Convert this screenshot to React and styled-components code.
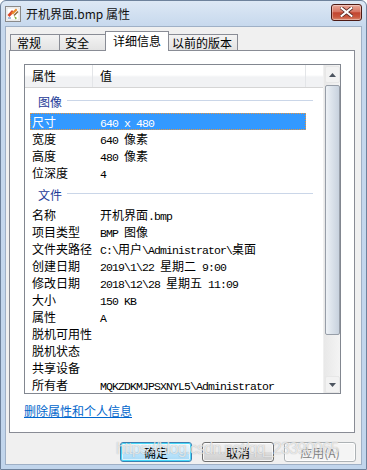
import styled, { createGlobalStyle, css } from 'styled-components'

const GlobalStyle = createGlobalStyle`
  html, body {
    margin: 0;
    padding: 0;
    background: #ffffff;
  }
  * {
    box-sizing: border-box;
  }
`

const UI_FONT = `"Noto Sans CJK SC", "Noto Sans", sans-serif`

const Window = styled.div`
  position: relative;
  width: 367px;
  height: 470px;
  display: flex;
  flex-direction: column;
  border: 1px solid #6e829c;
  border-radius: 6px 6px 0 0;
  background: linear-gradient(#dde8f5 0px, #c6d8ed 26px, #c1d5ec 100%);
  font-family: ${UI_FONT};
  font-size: 12px;
  color: #000;
  overflow: hidden;
`

const TitleBar = styled.div`
  height: 25px;
  display: flex;
  align-items: center;
  padding: 0 4px 0 4px;
`

const TitleText = styled.div`
  margin-left: 5px;
  font-size: 12px;
  color: #111;
  flex: 1;
`

const CloseButton = styled.div`
  width: 31px;
  height: 17px;
  margin-top: -3px;
  border: 1px solid #4d1a14;
  border-radius: 3px;
  background: linear-gradient(#e9a898 0%, #d77563 45%, #c2452f 52%, #c9583f 80%, #dc8a70 100%);
  box-shadow: inset 0 0 0 1px rgba(255, 255, 255, 0.35);
  display: flex;
  align-items: center;
  justify-content: center;
`

const Body = styled.div`
  position: relative;
  flex: 1;
  margin: 0 4px 4px 4px;
  border: 1px solid #9fb0c6;
  background: #f0f0f0;
  display: flex;
  flex-direction: column;
  padding: 4px 5px 0 3px;
  overflow: hidden;
`

const TabStrip = styled.div`
  display: flex;
  align-items: flex-end;
  height: 19px;
  padding-left: 1px;
  position: relative;
  z-index: 1;
`

const Tab = styled.div`
  width: ${p => p.$w}px;
  height: 16px;
  line-height: 15px;
  padding-left: ${p => p.$pad}px;
  margin-right: -1px;
  border: 1px solid #898c95;
  border-bottom: none;
  background: linear-gradient(#f3f3f3, #e3e3e3);
  font-size: 12px;
  white-space: nowrap;
  overflow: hidden;
  ${p => p.$active && css`
    height: 20px;
    line-height: 18px;
    margin: 0 -1px -1px -1px;
    background: #ffffff;
    position: relative;
    z-index: 2;
  `}
`

const Panel = styled.div`
  height: 383px;
  margin-right: 1px;
  border: 1px solid #898c95;
  background: #ffffff;
  padding: 13px 13px 0 14px;
  display: flex;
  flex-direction: column;
`

const ListView = styled.div`
  height: 330px;
  border: 1px solid #828790;
  display: flex;
  background: #fff;
`

const ListContent = styled.div`
  flex: 1;
  display: flex;
  flex-direction: column;
  overflow: hidden;
`

const Header = styled.div`
  height: 23px;
  display: flex;
  background: linear-gradient(#ffffff 0%, #ffffff 45%, #f1f2f4 55%, #f1f2f4 100%);
  border-bottom: 1px solid #d5d5d5;
`

const HeaderCell = styled.div`
  width: ${p => p.$w}px;
  padding-left: 7px;
  line-height: 22px;
  font-size: 12px;
  border-right: ${p => (p.$divider ? '1px solid #e3e5e8' : 'none')};
`

const GroupRow = styled.div`
  height: 25px;
  display: flex;
  align-items: center;
  padding: 1px 10px 0 13px;
  color: #1e3b98;
  font-size: 12px;
`

const GroupLine = styled.div`
  flex: 1;
  height: 1px;
  margin-left: 5px;
  margin-top: -1px;
  background: #cad6e8;
`

const Row = styled.div`
  height: 17px;
  width: 276px;
  margin-left: 5px;
  display: flex;
  align-items: center;
  border: 1px solid transparent;
  ${p => p.$selected && css`
    background: #3399ff;
    border: 1px dotted #e9953f;
    color: #ffffff;
  `}
`

const Label = styled.div`
  width: 69px;
  padding-left: 1px;
  font-size: 12px;
  white-space: nowrap;
`

const Value = styled.div`
  font-size: 12px;
  white-space: nowrap;
`

const Mono = styled.span`
  font-family: "Liberation Mono", "DejaVu Sans Mono", monospace;
  font-size: 11.5px;
  letter-spacing: -0.9px;
`

const ScrollBar = styled.div`
  width: 17px;
  display: flex;
  flex-direction: column;
  align-items: center;
  background: linear-gradient(to right, #e8e8e8, #f4f4f4);
  border-left: 1px solid #f0f0f0;
`

const ScrollArrow = styled.div`
  width: 15px;
  height: 17px;
  margin-top: ${p => (p.$down ? '0' : '1px')};
  display: flex;
  align-items: center;
  justify-content: center;
  background: #f2f2f2;
  border: 1px solid #e7e7e7;
  border-radius: 2px;
`

const ScrollThumb = styled.div`
  width: 15px;
  height: 250px;
  margin-top: 2px;
  border: 1px solid #979ea8;
  border-radius: 2px;
  background: linear-gradient(to right, #eef2f6 0%, #dde4ec 40%, #c8d2de 100%);
`

const ScrollTrack = styled.div`
  flex: 1;
`

const LinkText = styled.a`
  margin-top: 9px;
  align-self: flex-start;
  color: #0066cc;
  text-decoration: underline;
  font-size: 12px;
  line-height: 16px;
  cursor: pointer;
`

const ButtonRow = styled.div`
  display: flex;
  justify-content: flex-end;
  gap: 10px;
  margin-top: 9px;
`

const Button = styled.div`
  width: 72px;
  height: 20px;
  border: 1px solid #707070;
  border-radius: 3px;
  background: linear-gradient(#f2f2f2 0%, #ebebeb 50%, #dddddd 51%, #cfcfcf 100%);
  box-shadow: inset 0 0 0 1px rgba(255, 255, 255, 0.8);
  display: flex;
  align-items: center;
  justify-content: center;
  font-size: 12px;
  ${p => p.$default && css`
    border-color: #3c7fb1;
    box-shadow: inset 0 0 0 1px #48d8f8, inset 0 0 0 2px rgba(255, 255, 255, 0.6);
    background: linear-gradient(#eaf6fd 0%, #d9f0fc 50%, #bee6fd 51%, #a7d9f5 100%);
  `}
  ${p => p.$disabled && css`
    border-color: #adb2b5;
    background: #f4f4f4;
    color: #838383;
  `}
`

const Watermark = styled.div`
  position: absolute;
  left: 110px;
  top: 413px;
  font-family: "Liberation Sans", Arial, sans-serif;
  font-size: 16px;
  letter-spacing: -0.7px;
  color: rgba(255, 255, 255, 0.7);
  text-shadow: 0 0 1px rgba(90, 90, 90, 0.5);
  pointer-events: none;
  white-space: nowrap;
`

function mixed(text) {
  return text.split(/([\x00-\x7f]+)/).map((part, i) =>
    i % 2 === 1 ? <Mono key={i}>{part}</Mono> : part
  )
}

function BitmapIcon() {
  return (
    <svg width="16" height="16" viewBox="0 0 16 16">
      <rect x="0.5" y="0.5" width="15" height="15" fill="#f6f6f6" stroke="#8a8a8a" />
      <rect x="2" y="2" width="12" height="12" fill="#ffffff" stroke="#c8c8c8" strokeWidth="0.5" />
      <path d="M2.5 9 L7 4 L9 6 L4.5 11 Z" fill="#d9462a" />
      <path d="M6 7 L11 2.5 L12.5 4 L8 8.5 Z" fill="#e98b2e" />
      <path d="M8.5 9 L12.5 5 L13.5 6 L9.5 10 Z" fill="#8a6a3a" />
      <path d="M9 10 L10.5 13.5 L12 12 Z" fill="#7fae3a" />
      <path d="M3 12 L6 12" stroke="#4a7fc0" strokeWidth="1.2" />
    </svg>
  )
}

function CloseIcon() {
  return (
    <svg width="13" height="10" viewBox="0 0 13 10">
      <path d="M1.5 1 L11.5 9 M11.5 1 L1.5 9" stroke="#5a2a24" strokeWidth="3.6" strokeLinecap="square" />
      <path d="M1.5 1 L11.5 9 M11.5 1 L1.5 9" stroke="#ffffff" strokeWidth="2" strokeLinecap="square" />
    </svg>
  )
}

function Arrow({ down }) {
  return (
    <svg width="7" height="4" viewBox="0 0 7 4">
      <path d={down ? 'M0 0 L7 0 L3.5 4 Z' : 'M0 4 L7 4 L3.5 0 Z'} fill="#4d5560" />
    </svg>
  )
}

const imageRows = [
  { label: '尺寸', value: '640 x 480', selected: true },
  { label: '宽度', value: '640 像素' },
  { label: '高度', value: '480 像素' },
  { label: '位深度', value: '4' },
]

const fileRows = [
  { label: '名称', value: '开机界面.bmp' },
  { label: '项目类型', value: 'BMP 图像' },
  { label: '文件夹路径', value: 'C:\\用户\\Administrator\\桌面' },
  { label: '创建日期', value: '2019\\1\\22 星期二 9:00' },
  { label: '修改日期', value: '2018\\12\\28 星期五 11:09' },
  { label: '大小', value: '150 KB' },
  { label: '属性', value: 'A' },
  { label: '脱机可用性', value: '' },
  { label: '脱机状态', value: '' },
  { label: '共享设备', value: '' },
  { label: '所有者', value: 'MQKZDKMJPSXNYL5\\Administrator' },
]

const tabs = [
  { name: '常规', w: 50, pad: 6 },
  { name: '安全', w: 48, pad: 5 },
  { name: '详细信息', w: 64, pad: 7, active: true },
  { name: '以前的版本', w: 70, pad: 3 },
]

function Rows({ items }) {
  return items.map(r => (
    <Row key={r.label} $selected={r.selected}>
      <Label>{r.label}</Label>
      <Value>{mixed(r.value)}</Value>
    </Row>
  ))
}

export default function App() {
  return (
    <>
      <GlobalStyle />
      <Window>
        <TitleBar>
          <BitmapIcon />
          <TitleText>开机界面.bmp 属性</TitleText>
          <CloseButton>
            <CloseIcon />
          </CloseButton>
        </TitleBar>
        <Body>
          <TabStrip>
            {tabs.map(t => (
              <Tab key={t.name} $w={t.w} $pad={t.pad} $active={t.active}>
                {t.name}
              </Tab>
            ))}
          </TabStrip>
          <Panel>
            <ListView>
              <ListContent>
                <Header>
                  <HeaderCell $w={68} $divider>属性</HeaderCell>
                  <HeaderCell $w={213} $divider>值</HeaderCell>
                </Header>
                <GroupRow>
                  图像
                  <GroupLine />
                </GroupRow>
                <Rows items={imageRows} />
                <GroupRow>
                  文件
                  <GroupLine />
                </GroupRow>
                <Rows items={fileRows} />
              </ListContent>
              <ScrollBar>
                <ScrollArrow>
                  <Arrow />
                </ScrollArrow>
                <ScrollThumb />
                <ScrollTrack />
                <ScrollArrow $down>
                  <Arrow down />
                </ScrollArrow>
              </ScrollBar>
            </ListView>
            <LinkText>删除属性和个人信息</LinkText>
          </Panel>
          <ButtonRow>
            <Button $default>确定</Button>
            <Button>取消</Button>
            <Button $disabled>应用(A)</Button>
          </ButtonRow>
          <Watermark>https://blog.csdn.net/qq_23390965</Watermark>
        </Body>
      </Window>
    </>
  )
}
